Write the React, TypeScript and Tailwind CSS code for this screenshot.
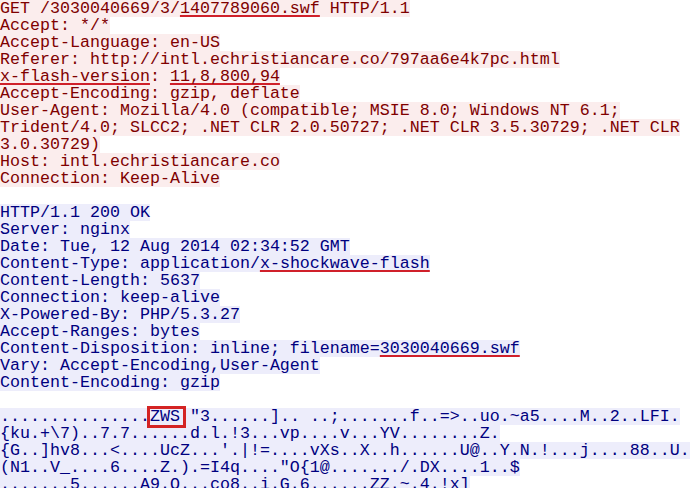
import type { ReactNode } from 'react';

type Part = string | { u: string } | { box: string };

const request: Part[][] = [
  ['GET /3030040669/3/', { u: '1407789060.swf' }, ' HTTP/1.1'],
  ['Accept: */*'],
  ['Accept-Language: en-US'],
  ['Referer: http://intl.echristiancare.co/797aa6e4k7pc.html'],
  [{ u: 'x-flash-version' }, ': ', { u: '11,8,800,94' }],
  ['Accept-Encoding: gzip, deflate'],
  ['User-Agent: Mozilla/4.0 (compatible; MSIE 8.0; Windows NT 6.1;'],
  ['Trident/4.0; SLCC2; .NET CLR 2.0.50727; .NET CLR 3.5.30729; .NET CLR'],
  ['3.0.30729)'],
  ['Host: intl.echristiancare.co'],
  ['Connection: Keep-Alive'],
];

const response: Part[][] = [
  ['HTTP/1.1 200 OK'],
  ['Server: nginx'],
  ['Date: Tue, 12 Aug 2014 02:34:52 GMT'],
  ['Content-Type: application/', { u: 'x-shockwave-flash' }],
  ['Content-Length: 5637'],
  ['Connection: keep-alive'],
  ['X-Powered-By: PHP/5.3.27'],
  ['Accept-Ranges: bytes'],
  ['Content-Disposition: inline; filename=', { u: '3030040669.swf' }],
  ['Vary: Accept-Encoding,User-Agent'],
  ['Content-Encoding: gzip'],
];

// ascii view of the swf body
const payload: Part[][] = [
  ['...............', { box: 'ZWS' }, ' "3......].. ..;.......f..=>..uo.~a5....M..2..LFI.'],
  ['{ku.+\\7)..7.7......d.l.!3...vp....v...YV........Z.'],
  ["{G..]hv8...<....UcZ...'.|!=....vXs..X..h......U@..Y.N.!...j....88..U."],
  ['(N1..V_....6....Z.).=I4q...."O{1@......./.DX....1..$'],
  ['.......5......A9.Q...co8..i.G.6......ZZ.~.4.!x]'],
];

function renderPart(p: Part, i: number): ReactNode {
  if (typeof p === 'string') return <span key={i}>{p}</span>;
  if ('u' in p)
    return (
      <span
        key={i}
        className="underline decoration-[#d0202a] decoration-2 underline-offset-[2px] [text-decoration-skip-ink:none]"
      >
        {p.u}
      </span>
    );
  return (
    <span key={i} className="relative">
      {p.box}
      <span className="absolute -left-[3px] -right-[6px] -top-[1px] -bottom-[2px] border-[3px] border-[#d42424]" />
    </span>
  );
}

function Block({ lines, side }: { lines: Part[][]; side: 'client' | 'server' }) {
  const tone = side === 'client' ? 'bg-[#fbeded] text-[#7f0000]' : 'bg-[#ededfb] text-[#00007f]';
  return (
    <div>
      {lines.map((line, i) => (
        <div key={i} className={`w-fit h-[17px] whitespace-pre ${tone}`}>
          {line.map(renderPart)}
        </div>
      ))}
    </div>
  );
}

export default function App() {
  return (
    <div className="w-[695px] h-[488px] overflow-hidden bg-white font-['Liberation_Mono','DejaVu_Sans_Mono',monospace] text-[16.67px] leading-[17px]">
      <Block lines={request} side="client" />
      <div className="h-[17px]" />
      <Block lines={response} side="server" />
      <div className="h-[17px]" />
      <Block lines={payload} side="server" />
    </div>
  );
}
